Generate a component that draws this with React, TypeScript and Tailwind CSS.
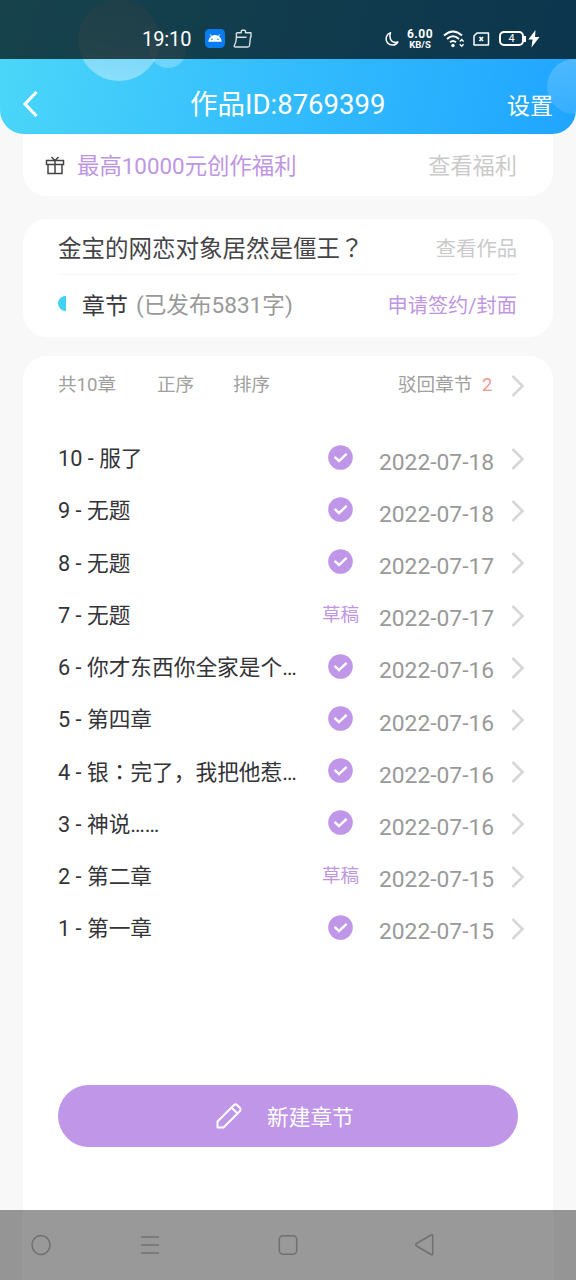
import React from "react";

type Chapter = {
  no: number;
  title: React.ReactNode;
  date: string;
  draft?: boolean;
};

// full-width mark centred in its cell
const Centered: React.FC<{ mark: string }> = ({ mark }) => (
  <span className="font-['Noto_Sans_CJK_TC',sans-serif]" lang="zh-TW">
    {mark}
  </span>
);

const chapters: Chapter[] = [
  { no: 10, title: "服了", date: "2022-07-18" },
  { no: 9, title: "无题", date: "2022-07-18" },
  { no: 8, title: "无题", date: "2022-07-17" },
  { no: 7, title: "无题", date: "2022-07-17", draft: true },
  { no: 6, title: "你才东西你全家是个…", date: "2022-07-16" },
  { no: 5, title: "第四章", date: "2022-07-16" },
  { no: 4, title: <>银<Centered mark="：" />完了，我把他惹…</>, date: "2022-07-16" },
  { no: 3, title: "神说……", date: "2022-07-16" },
  { no: 2, title: "第二章", date: "2022-07-15", draft: true },
  { no: 1, title: "第一章", date: "2022-07-15" },
];

const ChevronRight = () => (
  <svg width="14" height="24" viewBox="0 0 14 24" fill="none" className="mt-[2px] shrink-0">
    <path d="M1.5 2L11.5 12L1.5 22" stroke="#d6d6d6" strokeWidth="2.6" />
  </svg>
);

const CheckBadge = () => (
  <svg width="25" height="25" viewBox="0 0 25 25" fill="none" className="-mt-[2px]">
    <circle cx="12.5" cy="12.5" r="12.3" fill="#bf96e8" />
    <path d="M6.6 11.8L11 16.1L18.6 8.9" stroke="#fff" strokeWidth="2.5" />
  </svg>
);

const StatusBar = () => (
  <div className="relative flex h-[59px] items-center bg-[#051012]/75 pt-[18px] text-white">
    <span className="ml-[142px] w-[63px] text-[20px] leading-none tracking-[-0.1px]">19:10</span>
    <svg width="20" height="20" viewBox="0 0 20 20" className="shrink-0">
      <rect width="20" height="19" rx="4.5" fill="#0a7cf2" />
      <path d="M3.3 12.8a6.7 6.7 0 0 1 13.4 0z" fill="#fff" />
      <path d="M5.2 5.4l1.8 2.5M14.8 5.4L13 7.9" stroke="#fff" strokeWidth="1" />
      <circle cx="7" cy="10.2" r=".8" fill="#0a7cf2" />
      <circle cx="13" cy="10.2" r=".8" fill="#0a7cf2" />
    </svg>
    <svg width="20" height="20" viewBox="0 0 20 20" fill="none" stroke="#d7dfe3" strokeWidth="1.4" strokeLinejoin="round" className="ml-[8px] shrink-0">
      <path d="M3.500 3.800H8.300V2Q8.300 1.200 9.200 1.200H11.600Q12.500 1.200 12.500 2V3.800H18V8H17.500L16.500 16.500Q16.300 18 14.800 18H2.500Q.7 18 1.300 16.500 3.300 13 3.400 8.500V3.800M3.500 8.300H13.500" />
    </svg>
    <svg width="15" height="16" viewBox="0 0 15 16" fill="none" className="ml-[131px] shrink-0">
      <path d="M6.500 1.800A6.300 6.300 0 1 0 13.800 11Q8.500 12.500 6.500 8.300 5.200 5 6.500 1.800z" stroke="#fff" strokeWidth="1.500" strokeLinejoin="round" />
    </svg>
    <div className="ml-[7px] flex w-[28px] flex-col items-center font-bold">
      <span className="text-[12px] leading-[11px] tracking-[0.5px]">6.00</span>
      <span className="text-[9.500px] leading-[9px]">KB/S</span>
    </div>
    <svg width="22" height="18" viewBox="0 0 22 18" fill="none" stroke="#fff" className="ml-[9px] shrink-0">
      <path d="M1 5.500Q10 -2.500 19 5.500M4 9Q10 3.500 16 9M7 12.300Q10 9.800 13 12.300" strokeWidth="1.900" />
      <circle cx="10" cy="15.500" r="1.700" fill="#fff" stroke="none" />
      <path d="M16.800 11.500l1.900-2 1.900 2M16.800 14.300l1.900 2 1.900-2" strokeWidth="1.400" />
    </svg>
    <svg width="17" height="14" viewBox="0 0 17 14" fill="none" stroke="#fff" className="ml-[8px] shrink-0">
      <path d="M4 1H15.500V13H1V4z" strokeWidth="1.500" strokeLinejoin="round" />
      <path d="M6.500 5l3.500 4M10 5L6.500 9" strokeWidth="1.700" />
    </svg>
    <div className="ml-[9px] flex h-[15px] w-[25px] shrink-0 items-center justify-center rounded-[5px] border-2 border-white text-[11px] leading-none">
      4
    </div>
    <span className="h-[6px] w-[1.500px] bg-white" />
    <svg width="12" height="18" viewBox="0 0 12 18" className="ml-[2px] shrink-0">
      <path d="M7.500 0L.3 9.500H4.500L3.500 17.500L11.500 7H7z" fill="#fff" />
    </svg>
  </div>
);

const Header = () => (
  <header className="relative z-10 h-[134px] overflow-hidden rounded-b-[24px] bg-[linear-gradient(103deg,#4bd8f8_0%,#36bffd_45%,#1fa5ff_100%)]">
    <span className="absolute top-[-1px] left-[78px] h-[82px] w-[82px] rounded-full bg-linear-to-b from-[#d8c8c4]/25 to-white/38" />
    <span className="absolute top-[32px] left-[150px] h-[36px] w-[36px] rounded-full bg-white/25" />
    <span className="absolute top-[59px] left-[547px] h-[55px] w-[55px] rounded-full bg-linear-to-b from-white/20 to-white/10" />
    <StatusBar />
    <div className="relative flex h-[75px] items-center pb-[1px] text-white">
      <svg width="18" height="28" viewBox="0 0 18 28" fill="none" className="mt-[16px] ml-[22px]">
        <path d="M14.500 2L3 14L14.500 26" stroke="#fff" strokeWidth="3.200" />
      </svg>
      <h1 className="mt-[18px] ml-[150px] flex-1 text-[27.500px] leading-none font-normal whitespace-nowrap">作品ID:8769399</h1>
      <button className="mt-[20px] mr-[23px] text-[23px] leading-none">设置</button>
    </div>
  </header>
);

const WelfareCard = () => (
  <section className="mx-[23px] flex h-[62px] items-center rounded-b-[24px] bg-white pt-[3px] pr-[36px] pl-[22px]">
    <svg width="20" height="20" viewBox="0 0 20 20" fill="none" stroke="#444" strokeWidth="1.500" className="-mt-[3px] shrink-0">
      <path d="M1.500 5.500H18.500V9.500H1.500zM3 9.500V18.500H17V9.500M10 5.500V18.500M6.500 2L10 5.500L13.500 2" />
    </svg>
    <span className="ml-[12px] flex-1 text-[22.400px] leading-none text-[#bf96e3]">最高10000元创作福利</span>
    <span className="text-[22.200px] leading-none text-[#cacaca]">查看福利</span>
  </section>
);

const BookCard = () => (
  <section className="mx-[23px] mt-[23px] h-[118px] rounded-[24px] bg-white pr-[36px] pl-[35px]">
    <div className="flex h-[56px] items-center justify-between border-b border-[#f7f7f7] pt-[5px]">
      <h2 className="text-[23.500px] leading-none font-normal whitespace-nowrap text-[#444448]">
        金宝的网恋对象居然是僵王<Centered mark="？" />
      </h2>
      <span className="text-[20.300px] leading-none text-[#cacaca]">查看作品</span>
    </div>
    <div className="flex h-[60px] items-center">
      <span className="-mt-[3px] h-[15px] w-[8px] rounded-l-full bg-[#40d2f3]" />
      <span className="mt-[2px] ml-[16px] text-[23px] leading-none text-[#39393d]">章节</span>
      <span className="mt-[2px] ml-[8px] flex-1 text-[22.600px] leading-none text-[#999]">(已发布5831字)</span>
      <span className="mt-[2px] text-[20.200px] leading-none text-[#bf96e3]">申请签约/封面</span>
    </div>
  </section>
);

const ChapterRow: React.FC<{ chapter: Chapter }> = ({ chapter }) => (
  <li className="flex h-[52.200px] items-center">
    <span className="w-[258px] pt-[2px] text-[21.700px] leading-none whitespace-nowrap text-[#333338]">
      {chapter.no} - {chapter.title}
    </span>
    <span className="flex w-[49px] shrink-0 justify-center pt-[1px] text-[18.600px] leading-none text-[#bf96e3]">
      {chapter.draft ? "草稿" : <CheckBadge />}
    </span>
    <span className="ml-[14px] w-[132px] shrink-0 pt-[10px] text-[22.800px] leading-none text-[#999]">{chapter.date}</span>
    <ChevronRight />
  </li>
);

const ChapterCard = () => (
  <section className="mx-[23px] mt-[19px] flex-1 rounded-t-[24px] bg-white pr-[28px] pl-[35px]">
    <div className="flex h-[57px] items-center text-[18.600px] leading-none text-[#a0a0a0]">
      <span className="w-[99px] pt-[1px]">共10章</span>
      <span className="w-[76px] pt-[1px]">正序</span>
      <span className="w-[165px] pt-[1px]">排序</span>
      <span className="w-[84px] pt-[1px]">驳回章节</span>
      <span className="w-[29px] pt-[1px] text-[#ef9792]">2</span>
      <ChevronRight />
    </div>
    <ul className="mt-[19px]">
      {chapters.map((c) => (
        <ChapterRow key={c.no} chapter={c} />
      ))}
    </ul>
    <button className="mt-[131px] flex h-[62px] w-[460px] items-center rounded-full bg-[#bf96e8] text-[21.700px] leading-none text-white">
      <svg width="26" height="26" viewBox="0 0 26 26" fill="none" stroke="#fff" strokeWidth="2" strokeLinejoin="round" className="ml-[158px]">
        <path d="M1.500 24.500V18.500L18 2Q19.500 .8 21 2L24 5Q25 6.500 24 8L7.500 24.500zM15.500 4.500L21.500 10.500" />
      </svg>
      <span className="ml-[25px] pt-[3px]">新建章节</span>
    </button>
  </section>
);

const NavBar = () => (
  <nav className="absolute bottom-0 left-0 z-20 h-[70px] w-full bg-black/40 pt-[23px] pl-[30px]">
    <div className="flex items-center">
      <svg width="22" height="22" viewBox="0 0 22 22" fill="none" stroke="#707070" strokeWidth="1.500">
        <ellipse cx="11" cy="11" rx="9" ry="9.500" />
      </svg>
      <svg width="20" height="20" viewBox="0 0 20 20" stroke="#707070" strokeWidth="1.500" className="ml-[88px]">
        <path d="M1 2H19M1 10H19M1 18H19" />
      </svg>
      <svg width="22" height="22" viewBox="0 0 22 22" fill="none" stroke="#707070" strokeWidth="1.500" className="ml-[117px]">
        <rect x="2.300" y="1.700" width="17.400" height="18.600" rx="4" />
      </svg>
      <svg width="22" height="24" viewBox="0 0 22 24" fill="none" stroke="#707070" strokeWidth="1.500" strokeLinejoin="round" className="ml-[114px]">
        <path d="M18 2Q19.700 1 19.700 3V20.500Q19.700 22.500 18 21.500L3.500 13Q2 11.700 3.500 10.500z" />
      </svg>
    </div>
  </nav>
);

export default function App() {
  return (
    <div className="relative flex h-[1280px] w-[576px] flex-col overflow-hidden bg-[#f8f8f8] font-[Roboto,'Noto_Sans_CJK_SC',sans-serif]">
      <Header />
      <WelfareCard />
      <BookCard />
      <ChapterCard />
      <NavBar />
    </div>
  );
}
